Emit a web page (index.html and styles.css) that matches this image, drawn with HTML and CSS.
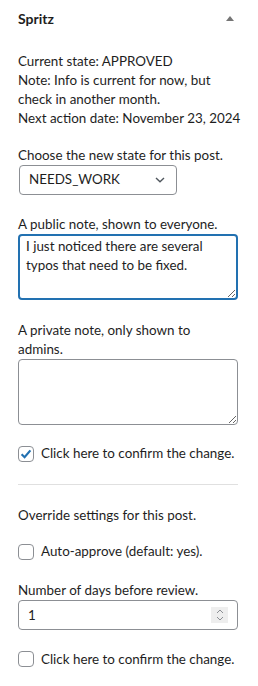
FILE: index.html
```html
<!DOCTYPE html>
<html lang="en">
<head>
    <meta charset="UTF-8">
    <meta name="viewport" content="width=device-width, initial-scale=1.0">
    <title>Spritz</title>
    <link rel="stylesheet" href="styles.css">
</head>
<body>
    <div class="panel">
        <div class="panel-header">
            <h2>Spritz</h2>
            <svg class="toggle" width="10" height="6" viewBox="0 0 10 6"><path d="M1 6 L5 1 L9 6 Z" fill="#757575"/></svg>
        </div>

        <p class="status">
            Current state: APPROVED<br>
            Note: Info is current for now, but check in another month.<br>
            <span class="nowrap">Next action date: November 23, 2024</span>
        </p>

        <div class="field first">
            <label>Choose the new state for this post.</label>
            <div class="select">
                <span>NEEDS_WORK</span>
                <svg width="12" height="8" viewBox="0 0 12 8"><path d="M2 2 L6 5.8 L10 2" fill="none" stroke="#50575e" stroke-width="1.4"/></svg>
            </div>
        </div>

        <div class="field">
            <label>A public note, shown to everyone.</label>
            <textarea class="note focused">I just noticed there are several typos that need to be fixed.</textarea>
        </div>

        <div class="field">
            <label>A private note, only shown to admins.</label>
            <textarea class="note"></textarea>
        </div>

        <div class="check-row">
            <span class="checkbox">
                <svg width="14" height="14" viewBox="0 0 14 14"><path d="M2.6 7.2 L5.6 10.2 L11.4 3.4" fill="none" stroke="#2271b1" stroke-width="2.2"/></svg>
            </span>
            Click here to confirm the change.
        </div>

        <hr class="divider">

        <p class="override">Override settings for this post.</p>

        <div class="check-row tight">
            <span class="checkbox"></span>
            Auto-approve (default: yes).
        </div>

        <div class="field days">
            <label>Number of days before review.</label>
            <div class="number">
                <span>1</span>
                <span class="spin">
                    <svg width="10" height="14" viewBox="0 0 10 14"><path d="M2 5 L5 2 L8 5 M2 9 L5 12 L8 9" fill="none" stroke="#8c8f94" stroke-width="1"/></svg>
                </span>
            </div>
        </div>

        <div class="check-row">
            <span class="checkbox"></span>
            Click here to confirm the change.
        </div>
    </div>
</body>
</html>
```

FILE: styles.css
```css
body {
    margin: 0;
    background-color: #fff;
    font-family: Lato, "Liberation Sans", sans-serif;
    font-size: 13.4px;
    line-height: 19px;
    color: #1e1e1e;
}
.panel {
    padding: 0 20px 20px 18px;
}
.panel-header {
    display: flex;
    align-items: center;
    justify-content: space-between;
    height: 36px;
    padding-right: 3px;
}
.panel-header h2 {
    margin: 0;
    font-size: 14px;
    font-weight: bold;
}
.status {
    margin: 16px 0 0;
}
.nowrap {
    white-space: nowrap;
}
.field {
    margin-top: 20.5px;
}
.field.first {
    margin-top: 17.5px;
}
.field.days {
    margin-top: 20px;
}
.field label {
    display: block;
}
.select {
    display: flex;
    align-items: center;
    justify-content: space-between;
    width: 158px;
    height: 30px;
    box-sizing: border-box;
    margin-left: 1px;
    padding: 0 10px 0 9px;
    border: 1px solid #8c8f94;
    border-radius: 4px;
}
.note {
    display: block;
    width: 100%;
    height: 66px;
    box-sizing: border-box;
    margin: 0;
    padding: 2px 7px;
    border: 1px solid #8c8f94;
    border-radius: 4px;
    font-family: inherit;
    font-size: inherit;
    line-height: 19px;
    color: #1e1e1e;
    resize: vertical;
}
.note.focused {
    border: 2px solid #2271b1;
    padding: 1px 6px;
}
.check-row {
    display: flex;
    align-items: center;
    gap: 7px;
    margin-top: 19.5px;
}
.check-row.tight {
    margin-top: 17.5px;
}
.checkbox {
    display: flex;
    align-items: center;
    justify-content: center;
    width: 16px;
    height: 16px;
    box-sizing: border-box;
    border: 1px solid #8c8f94;
    border-radius: 4px;
}
.divider {
    margin: 21px 0 0;
    border: 0;
    border-top: 1px solid #e0e0e0;
}
.override {
    margin: 20.5px 0 0;
}
.number {
    display: flex;
    align-items: center;
    justify-content: space-between;
    height: 30px;
    box-sizing: border-box;
    padding: 0 9px 0 9px;
    border: 1px solid #8c8f94;
    border-radius: 4px;
}
.spin {
    display: flex;
    align-items: center;
    justify-content: center;
    width: 17px;
    height: 16px;
    background-color: #eeeeee;
}
```
